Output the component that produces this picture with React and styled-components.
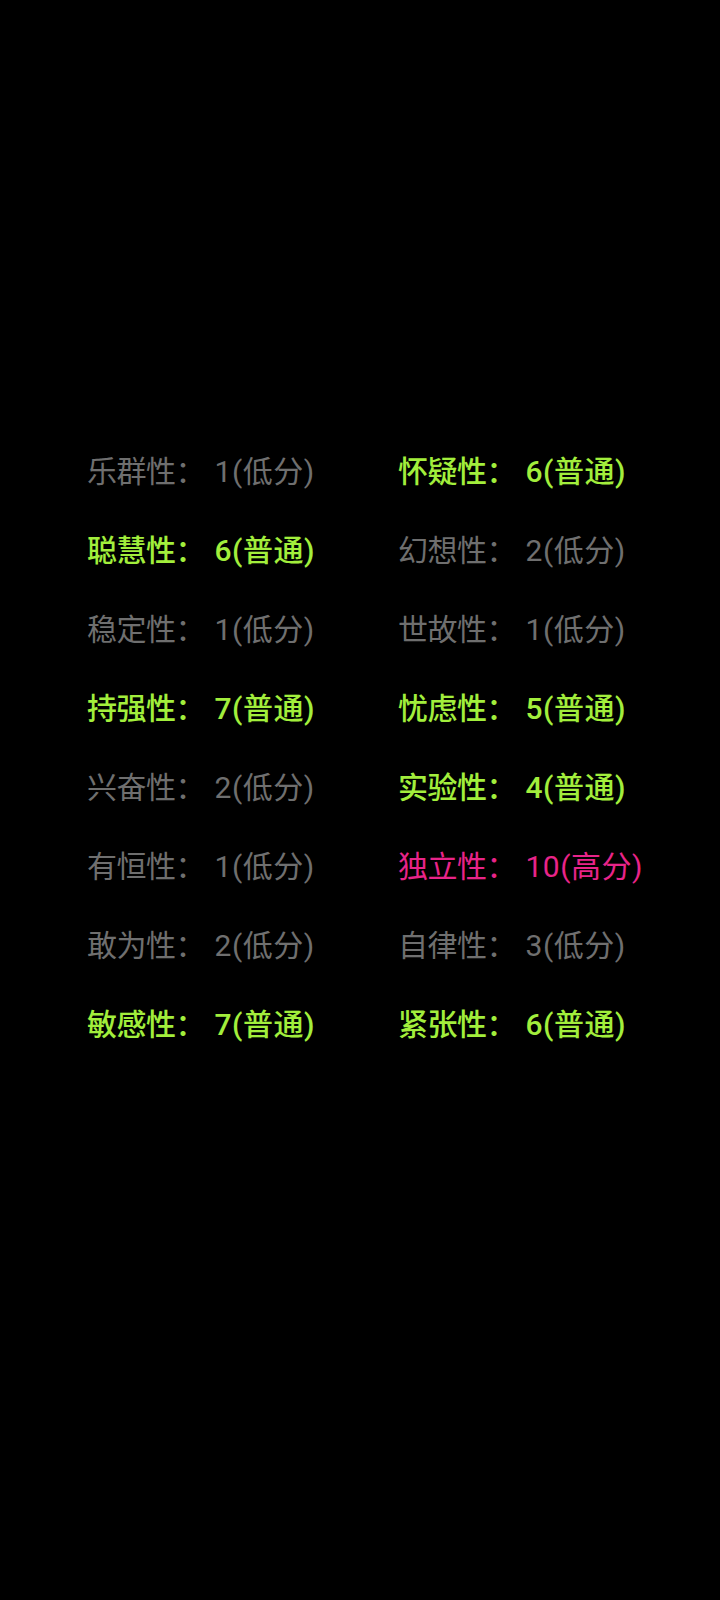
import React from 'react';
import styled, { createGlobalStyle } from 'styled-components';

const GlobalStyle = createGlobalStyle`
  html, body {
    margin: 0;
    padding: 0;
    background: #000;
  }
`;

const Page = styled.div`
  min-height: 1600px;
  background: #000;
  padding: 432px 0 0 87px;
  box-sizing: border-box;
  font-family: Roboto, "Noto Sans CJK SC", sans-serif;
`;

const Grid = styled.div`
  display: grid;
  grid-template-columns: 311px auto;
  grid-auto-rows: 79px;
`;

const colors = {
  low: '#6f6f6f',
  mid: '#a2ee3c',
  high: '#e82489',
};

const Item = styled.div`
  font-size: 30px;
  line-height: 79px;
  white-space: nowrap;
  color: ${(p) => colors[p.$level]};
  font-weight: ${(p) => (p.$level === 'mid' ? 500 : 400)};
`;

const Name = styled.span`
  letter-spacing: -0.5px;
`;

// wider gap after the full-width colon, as on the phone
const Colon = styled.span`
  margin-right: 9px;
`;

const Score = styled.span`
  letter-spacing: 0.5px;
`;

const traits = [
  ['乐群性', 1, 'low'], ['怀疑性', 6, 'mid'],
  ['聪慧性', 6, 'mid'], ['幻想性', 2, 'low'],
  ['稳定性', 1, 'low'], ['世故性', 1, 'low'],
  ['持强性', 7, 'mid'], ['忧虑性', 5, 'mid'],
  ['兴奋性', 2, 'low'], ['实验性', 4, 'mid'],
  ['有恒性', 1, 'low'], ['独立性', 10, 'high'],
  ['敢为性', 2, 'low'], ['自律性', 3, 'low'],
  ['敏感性', 7, 'mid'], ['紧张性', 6, 'mid'],
];

const labels = { low: '低分', mid: '普通', high: '高分' };

export default function App() {
  return (
    <Page>
      <GlobalStyle />
      <Grid>
        {traits.map(([name, score, level]) => (
          <Item key={name} $level={level}>
            <Name>{name}</Name><Colon>：</Colon><Score>{score}({labels[level]})</Score>
          </Item>
        ))}
      </Grid>
    </Page>
  );
}
